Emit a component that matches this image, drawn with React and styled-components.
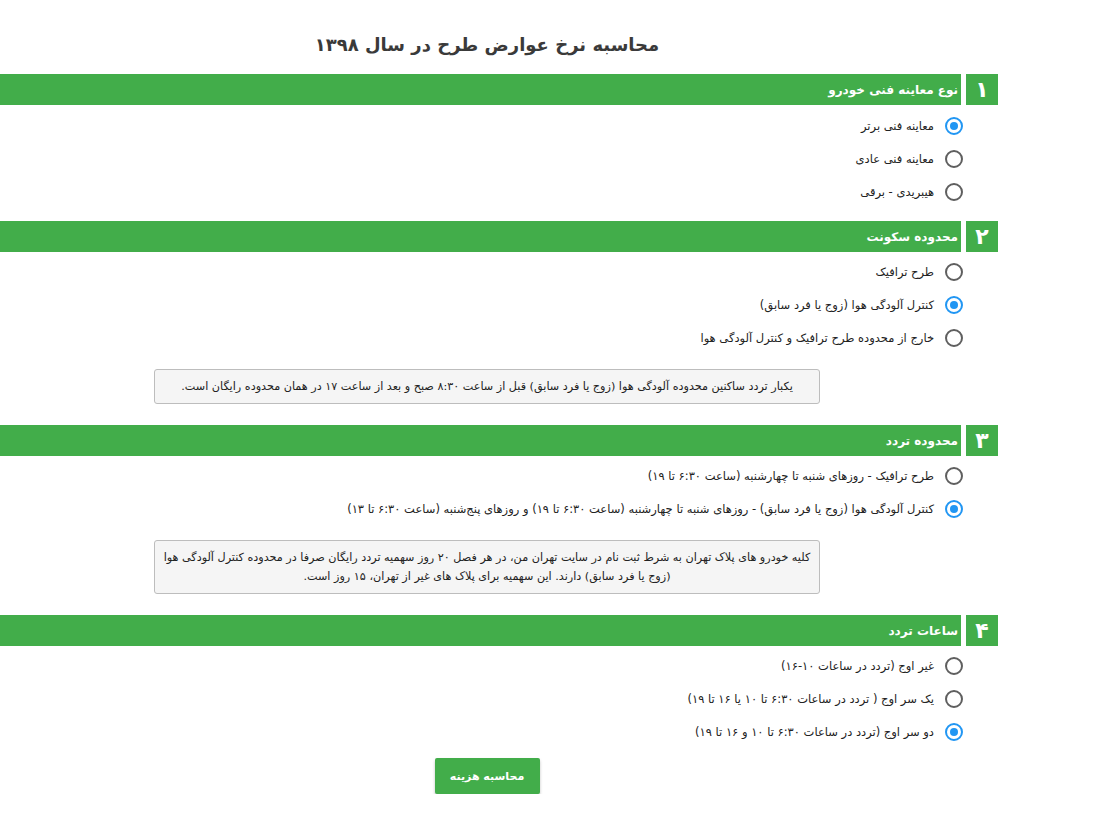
import React from "react";
import styled, { createGlobalStyle } from "styled-components";

const Global = createGlobalStyle`
  html, body { margin: 0; padding: 0; background: #fff; }
  body { font-family: "DejaVu Sans", "Noto Sans", sans-serif; color: #222; }
`;

const GREEN = "#42ad4a";

const Page = styled.div`
  width: 998px;
  direction: rtl;
`;

const Title = styled.h1`
  margin: 0 0 14px;
  padding: 30px 24px 0 0;
  height: 30px;
  line-height: 30px;
  text-align: center;
  font-size: 18px;
  font-weight: bold;
  color: #3a3a3a;
`;

const Section = styled.section``;

const Header = styled.div`
  display: flex;
  height: 31px;
  gap: 5px;
`;

const NumBox = styled.div`
  width: 32px;
  background: ${GREEN};
  color: #fff;
  font-size: 22px;
  font-weight: bold;
  display: flex;
  align-items: center;
  justify-content: center;
`;

const Bar = styled.div`
  flex: 1;
  background: ${GREEN};
  color: #fff;
  font-size: 12px;
  font-weight: bold;
  display: flex;
  align-items: center;
  padding-right: 3px;
`;

const Body = styled.div`
  padding: ${(p) => (p.$first ? "4px" : "3px")} 24px ${(p) => (p.$last ? "0" : "13px")} 0;
`;

const Options = styled.div`
  display: flex;
  flex-direction: column;
  padding-right: 11px;
`;

const Option = styled.label`
  display: flex;
  align-items: center;
  height: 33px;
  gap: 11px;
  font-size: 11.5px;
  cursor: pointer;
  color: #222;
`;

const Radio = styled.span`
  width: 18px;
  height: 18px;
  box-sizing: border-box;
  border-radius: 50%;
  border: 2px solid ${(p) => (p.$checked ? "#2196f3" : "#5f5f5f")};
  display: flex;
  align-items: center;
  justify-content: center;
  flex-shrink: 0;
  &::after {
    content: "";
    width: 8px;
    height: 8px;
    border-radius: 50%;
    background: ${(p) => (p.$checked ? "#2196f3" : "transparent")};
  }
`;

const Info = styled.div`
  width: 666px;
  box-sizing: border-box;
  margin: 15px auto 8px;
  background: #f5f5f5;
  border: 1px solid #bdbdbd;
  border-radius: 3px;
  padding: 7px 6px;
  text-align: center;
  font-size: 11.2px;
  line-height: 19px;
  color: #222;
`;

const Actions = styled.div`
  display: flex;
  justify-content: center;
  padding: 10px 24px 0 0;
`;

const Button = styled.button`
  background: ${GREEN};
  color: #fff;
  border: none;
  border-radius: 2px;
  width: 105px;
  height: 36px;
  font-family: inherit;
  font-size: 11px;
  font-weight: bold;
  box-shadow: 0 2px 3px rgba(0, 0, 0, 0.25);
  cursor: pointer;
`;

const sections = [
  {
    n: "۱",
    title: "نوع معاینه فنی خودرو",
    options: ["معاینه فنی برتر", "معاینه فنی عادی", "هیبریدی - برقی"],
    checked: 0,
  },
  {
    n: "۲",
    title: "محدوده سکونت",
    options: [
      "طرح ترافیک",
      "کنترل آلودگی هوا (زوج یا فرد سابق)",
      "خارج از محدوده طرح ترافیک و کنترل آلودگی هوا",
    ],
    checked: 1,
    info: "یکبار تردد ساکنین محدوده آلودگی هوا (زوج یا فرد سابق) قبل از ساعت ۸:۳۰ صبح و بعد از ساعت ۱۷ در همان محدوده رایگان است.",
  },
  {
    n: "۳",
    title: "محدوده تردد",
    options: [
      "طرح ترافیک - روزهای شنبه تا چهارشنبه (ساعت ۶:۳۰ تا ۱۹)",
      "کنترل آلودگی هوا (زوج یا فرد سابق) - روزهای شنبه تا چهارشنبه (ساعت ۶:۳۰ تا ۱۹) و روزهای پنج‌شنبه (ساعت ۶:۳۰ تا ۱۳)",
    ],
    checked: 1,
    info: "کلیه خودرو های پلاک تهران به شرط ثبت نام در سایت تهران من، در هر فصل ۲۰ روز سهمیه تردد رایگان صرفا در محدوده کنترل آلودگی هوا (زوج یا فرد سابق) دارند. این سهمیه برای پلاک های غیر از تهران، ۱۵ روز است.",
  },
  {
    n: "۴",
    title: "ساعات تردد",
    options: [
      "غیر اوج (تردد در ساعات ۱۰-۱۶)",
      "یک سر اوج ( تردد در ساعات ۶:۳۰ تا ۱۰ یا ۱۶ تا ۱۹)",
      "دو سر اوج (تردد در ساعات ۶:۳۰ تا ۱۰ و ۱۶ تا ۱۹)",
    ],
    checked: 2,
  },
];

export default function App() {
  const [values, setValues] = React.useState(sections.map((s) => s.checked));
  return (
    <Page>
      <Global />
      <Title>محاسبه نرخ عوارض طرح در سال ۱۳۹۸</Title>
      {sections.map((s, si) => (
        <Section key={si}>
          <Header>
            <NumBox>{s.n}</NumBox>
            <Bar>{s.title}</Bar>
          </Header>
          <Body $first={si === 0} $last={si === sections.length - 1}>
            <Options>
              {s.options.map((o, oi) => (
                <Option
                  key={oi}
                  onClick={() =>
                    setValues((v) => v.map((x, i) => (i === si ? oi : x)))
                  }
                >
                  <Radio $checked={values[si] === oi} />
                  <span>{o}</span>
                </Option>
              ))}
            </Options>
            {s.info && <Info>{s.info}</Info>}
          </Body>
        </Section>
      ))}
      <Actions>
        <Button>محاسبه هزینه</Button>
      </Actions>
    </Page>
  );
}
